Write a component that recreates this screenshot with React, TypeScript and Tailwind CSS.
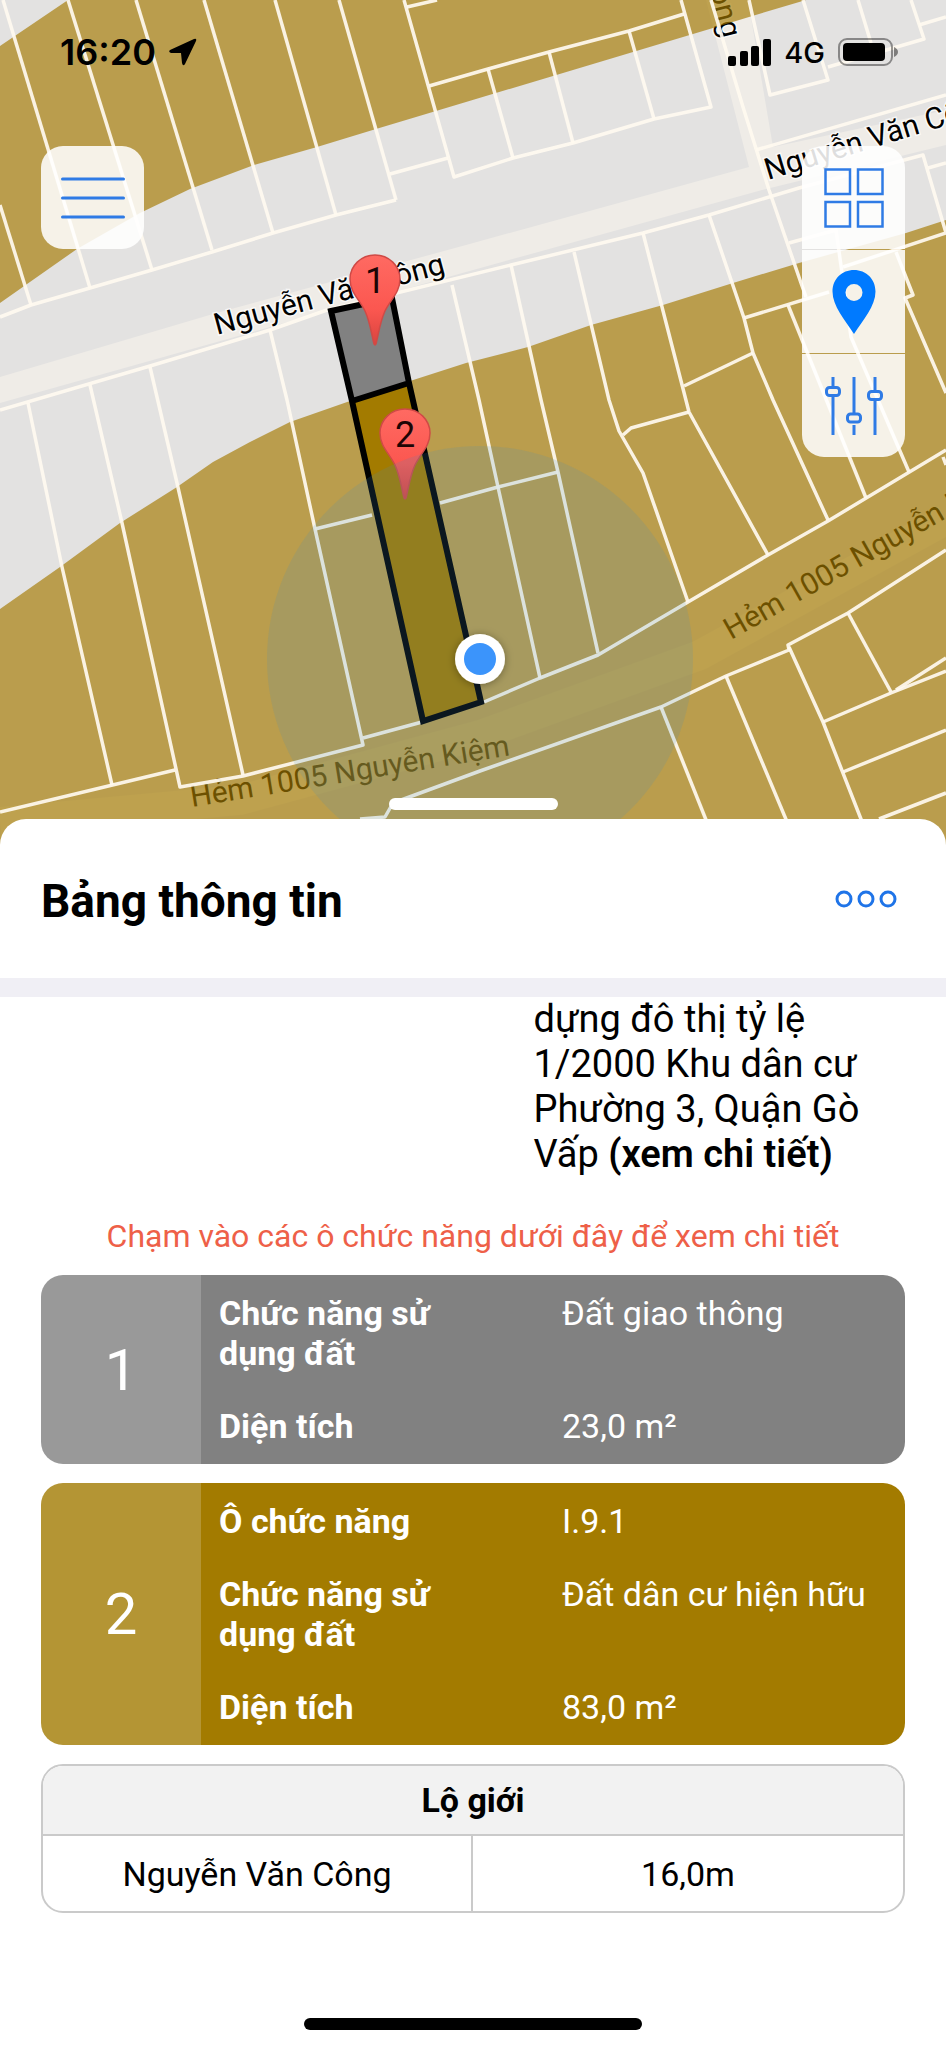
import React from 'react';

type Point = [number, number];

/* Parcel boundaries, each a run of points on the map canvas. */
const parcelLines: Point[][] = [
  [[3, 0], [90, 288]],
  [[68, 0], [152, 270]],
  [[136, 0], [212, 250]],
  [[204, 0], [273, 233]],
  [[275, 0], [336, 215]],
  [[339, 0], [396, 200]],
  [[0, 205], [31, 305]],
  [[0, 317], [31, 305], [90, 288], [152, 270], [212, 252], [273, 233], [336, 215], [396, 200]],
  [[404, 0], [454, 177], [513, 158], [573, 143], [654, 119], [711, 107], [681, 0]],
  [[390, 174], [448, 158]],
  [[407, 7], [437, 0]],
  [[429, 86], [488, 69], [549, 52], [629, 31], [684, 14]],
  [[488, 69], [513, 158]],
  [[549, 52], [573, 143]],
  [[629, 31], [654, 119]],
  [[711, 0], [743, 107], [769, 190], [801, 283], [806, 297]],
  [[749, 0], [770, 95], [828, 80], [803, 0]],
  [[828, 67], [924, 39], [911, 0]],
  [[858, 0], [871, 43]],
  [[919, 25], [946, 17]],
  [[756, 150], [946, 95]],
  [[0, 410], [150, 366], [270, 330], [327, 310], [511, 265], [643, 233], [709, 215], [799, 188], [923, 155], [946, 233], [843, 267]],
  [[928, 168], [946, 163]],
  [[789, 243], [836, 230], [851, 337], [909, 472]],
  [[744, 318], [829, 292]],
  [[788, 305], [866, 498]],
  [[896, 252], [913, 295], [905, 298], [946, 393]],
  [[943, 457], [946, 465]],
  [[709, 215], [744, 318], [753, 353], [773, 400], [828, 520]],
  [[684, 386], [753, 353]],
  [[643, 233], [689, 412], [768, 555]],
  [[623, 435], [631, 428], [689, 412]],
  [[574, 252], [609, 400], [619, 431], [643, 473], [688, 602]],
  [[511, 265], [541, 400], [558, 472], [598, 653]],
  [[452, 285], [479, 400], [498, 487], [540, 678]],
  [[484, 702], [540, 678], [598, 655], [688, 602], [768, 555], [828, 521], [946, 450]],
  [[315, 529], [372, 515]],
  [[440, 503], [498, 487], [558, 472]],
  [[28, 403], [62, 567], [112, 785]],
  [[90, 385], [122, 523], [180, 787], [243, 776], [363, 745], [315, 529], [287, 400], [270, 330]],
  [[150, 367], [177, 483], [243, 775]],
  [[0, 812], [175, 770]],
  [[363, 738], [422, 722]],
  [[360, 819], [385, 817], [393, 803], [480, 771], [661, 707], [726, 676], [789, 650], [788, 645], [848, 613], [946, 550]],
  [[661, 707], [722, 860]],
  [[726, 676], [803, 860]],
  [[789, 647], [823, 722], [877, 860]],
  [[848, 613], [891, 692]],
  [[823, 722], [891, 693], [946, 671]],
  [[896, 690], [946, 658]],
  [[843, 772], [946, 730]],
  [[879, 819], [946, 793]],
];

function MapMarker({ x, y, label }: { x: number; y: number; label: string }) {
  return (
    <g transform={`translate(${x} ${y})`}>
      <path
        d="M0-25C14-25 25-14 25-1C25 12 16 19 10 31C5 42 4 52 1 64Q0 66-1 64C-4 52-5 42-10 31C-16 19-25 12-25-1C-25-14-14-25 0-25Z"
        fill="url(#marker)"
        stroke="#cf4a46"
        strokeWidth="1.5"
      />
      <text y="13" textAnchor="middle" className="fill-[#1d0505] font-['Roboto',sans-serif] text-[36px]">
        {label}
      </text>
    </g>
  );
}

function MapCanvas() {
  const halo = "fill-black stroke-white/70 stroke-[3px] font-['Roboto',sans-serif] text-[30px] [paint-order:stroke]";
  const plain = "fill-black font-['Roboto',sans-serif] text-[30px]";
  return (
    <svg
      viewBox="0 0 946 860"
      preserveAspectRatio="xMidYMin slice"
      className="absolute inset-x-0 top-0 h-[860px] w-full"
      role="img"
      aria-label="Nguyễn Văn Công"
    >
      <defs>
        <linearGradient id="marker" x1="0" y1="0" x2="0" y2="1">
          <stop offset="0" stopColor="#ff6a62" />
          <stop offset="0.6" stopColor="#fb5750" />
          <stop offset="1" stopColor="#d9443f" />
        </linearGradient>
        <filter id="shade" x="-50%" y="-50%" width="200%" height="200%">
          <feDropShadow dx="0" dy="1" stdDeviation="4" floodOpacity="0.35" />
        </filter>
      </defs>
      <rect width="946" height="860" fill="#e3e2e1" />

      {/* Roads */}
      <path d="M0 377L213 314L466 245L749 167L706 0H748L773 147L946 110V145L762 190L466 272L0 403Z" fill="#efece7" />
      <path d="M0 822L240 800L480 735L700 655L946 520" fill="none" stroke="#efece5" strokeWidth="30" />

      {/* Street names */}
      <text transform="translate(217 335) rotate(-15.2)" className={halo}>Nguyễn Văn Công</text>
      <text transform="translate(768 180) rotate(-17)" className={halo}>Nguyễn Văn Công</text>
      <text transform="translate(722 39) rotate(76)" textAnchor="end" className={halo}>ông</text>
      <text transform="translate(192 807) rotate(-9.2)" className={plain}>Hẻm 1005 Nguyễn Kiệm</text>
      <text transform="translate(731 640) rotate(-29.5)" className={plain}>Hẻm 1005 Nguyễn Kiệm</text>

      {/* Residential land */}
      <g fill="#a47a00" fillOpacity="0.66">
        <path d="M68 0H806L749 17L713 28L633 52L563 73L466 102L376 129L317 147L254 165L190 189L140 213L77 249L0 303V46Z" />
        <path d="M0 609L60 567L120 523L177 487L213 462L250 442L290 422L350 401L407 382L466 363L528 347L591 325L663 305L733 283L799 263L906 233L946 220V860H0Z" />
      </g>

      <g fill="none" stroke="#fffaf0" strokeWidth="3.5" strokeLinejoin="round">
        {parcelLines.map((line, i) => (
          <polyline key={i} points={line.map((p) => p.join(',')).join(' ')} strokeOpacity="0.92" />
        ))}
      </g>

      {/* Selected lot */}
      <path d="M331 311L392 298L409 383L352 401Z" fill="#818181" />
      <path d="M352 401L409 383L481 702L423 721Z" fill="#a37b00" />
      <path d="M331 311L392 298L409 383L481 702L423 721L352 401ZM352 401L409 383" fill="none" stroke="#000" strokeWidth="6" />

      <MapMarker x={375} y={280} label="1" />
      <MapMarker x={405} y={434} label="2" />

      <circle cx="480" cy="659" r="213" fill="#4290be" fillOpacity="0.16" />
      <circle cx="480" cy="659" r="25" fill="#fff" filter="url(#shade)" />
      <circle cx="480" cy="659" r="16" fill="#3b94fb" />
    </svg>
  );
}

function StatusBar() {
  return (
    <div className="flex h-[104px] items-center justify-between pr-[48px] pl-[60px] font-['Inter',sans-serif] text-black">
      <div className="flex items-center gap-3">
        <span className="text-[36px] leading-none font-semibold">16:20</span>
        <svg viewBox="0 0 30 28" className="h-7 w-[30px]" aria-hidden="true">
          <path d="M2 12L26 1Q29 0 28 3L17 26Q15 29 14 25L13 15L3 15Q0 14 2 12Z" />
        </svg>
      </div>
      <div className="flex items-center gap-[13px]">
        <svg viewBox="0 0 43 27" className="h-[27px] w-[43px]" aria-hidden="true">
          <rect x="0" y="17" width="8" height="10" rx="2" />
          <rect x="12" y="12" width="8" height="15" rx="2" />
          <rect x="23" y="7" width="8" height="20" rx="2" />
          <rect x="35" y="0" width="8" height="27" rx="2" />
        </svg>
        <span className="text-[29px] leading-none font-medium">4G</span>
        <svg viewBox="0 0 60 28" className="h-7 w-[60px]" aria-hidden="true">
          <rect x="1" y="1" width="53" height="26" rx="8" fill="none" stroke="#000" strokeOpacity="0.4" strokeWidth="2" />
          <rect x="5" y="5" width="42" height="18" rx="4" />
          <path d="M56 9Q60 11 60 14T56 19Z" fillOpacity="0.45" />
        </svg>
      </div>
    </div>
  );
}

function ToolButton({ label, className, children }: { label: string; className: string; children: React.ReactNode }) {
  return (
    <button type="button" aria-label={label} className={`flex size-[103px] items-center justify-center bg-white/87 ${className}`}>
      {children}
    </button>
  );
}

function MapTools() {
  return (
    <div className="mt-[42px] flex items-start justify-between px-[41px]">
      <ToolButton label="Menu" className="rounded-[22px]">
        <svg viewBox="0 0 64 44" className="h-11 w-16" stroke="#2f7be5" strokeWidth="3" strokeLinecap="round" aria-hidden="true">
          <path d="M1.500 3H62.500M1.500 22H62.500M1.500 41H62.500" />
        </svg>
      </ToolButton>
      <div className="flex flex-col gap-px">
        <ToolButton label="Lớp bản đồ" className="rounded-t-[22px]">
          <svg viewBox="0 0 60 60" className="size-[60px]" fill="none" stroke="#2f7be5" strokeWidth="2.500" aria-hidden="true">
            <rect x="1.500" y="1.500" width="24.500" height="24.500" />
            <rect x="34" y="1.500" width="24.500" height="24.500" />
            <rect x="1.500" y="34" width="24.500" height="24.500" />
            <rect x="34" y="34" width="24.500" height="24.500" />
          </svg>
        </ToolButton>
        <ToolButton label="Vị trí" className="">
          <svg viewBox="0 0 44 64" className="h-16 w-11" aria-hidden="true">
            <path fillRule="evenodd" d="M22 0C34 0 43.500 9 43.500 21.500C43.500 36 31 50 22 64C13 50 .5 36 .5 21.500C.5 9 10 0 22 0ZM22 14A8.500 8.500 0 1 0 22 31A8.500 8.500 0 1 0 22 14Z" fill="#007aff" />
          </svg>
        </ToolButton>
        <ToolButton label="Bộ lọc" className="rounded-b-[22px]">
          <svg viewBox="0 0 58 58" className="size-[58px]" fill="none" stroke="#2f7be5" strokeWidth="3" aria-hidden="true">
            <path d="M8 0V10M8 20V58M29 0V36M29 48V58M50 0V14M50 24V58" />
            <rect x="1.500" y="10.500" width="13" height="8" rx="3" />
            <rect x="22.500" y="37" width="13" height="8" rx="3" />
            <rect x="43.500" y="14.500" width="13" height="8" rx="3" />
          </svg>
        </ToolButton>
      </div>
    </div>
  );
}

interface Zone {
  id: number;
  numberClass: string;
  bodyClass: string;
  rows: { label: string; value: string }[];
}

const zones: Zone[] = [
  {
    id: 1,
    numberClass: 'bg-[#999999]',
    bodyClass: 'bg-[#818181]',
    rows: [
      { label: 'Chức năng sử dụng đất', value: 'Đất giao thông' },
      { label: 'Diện tích', value: '23,0 m²' },
    ],
  },
  {
    id: 2,
    numberClass: 'bg-[#b49534]',
    bodyClass: 'bg-[#a37b00]',
    rows: [
      { label: 'Ô chức năng', value: 'I.9.1' },
      { label: 'Chức năng sử dụng đất', value: 'Đất dân cư hiện hữu' },
      { label: 'Diện tích', value: '83,0 m²' },
    ],
  },
];

function ZoneCard({ zone }: { zone: Zone }) {
  return (
    <button type="button" className="flex w-full overflow-hidden rounded-[22px] text-left text-white">
      <span className={`flex w-[160px] shrink-0 items-center justify-center self-stretch text-[58px] leading-none ${zone.numberClass}`}>
        {zone.id}
      </span>
      <span className={`flex flex-1 flex-col gap-[33px] px-[18px] py-[18px] text-[34px] leading-10 ${zone.bodyClass}`}>
        {zone.rows.map((row) => (
          <span key={row.label} className="grid grid-cols-2 gap-[18px]">
            <span className="pr-20 font-bold">{row.label}</span>
            <span>{row.value}</span>
          </span>
        ))}
      </span>
    </button>
  );
}

export default function App() {
  return (
    <div className="min-h-screen bg-white font-['Roboto',sans-serif] text-black">
      <section className="relative h-[819px]">
        <MapCanvas />
        <div className="relative flex h-full flex-col">
          <StatusBar />
          <MapTools />
          <div className="mx-auto mt-auto mb-[9px] h-3 w-[169px] rounded-full bg-white" />
        </div>
      </section>

      <main className="relative rounded-t-[26px] bg-white">
        <header className="flex h-[159px] items-center justify-between pr-[43px] pl-[41px]">
          <h1 className="pt-1 text-[46px] leading-[54px] font-bold">Bảng thông tin</h1>
          <button type="button" aria-label="Thêm" className="px-[6px] py-3">
            <svg viewBox="0 0 62 18" className="h-[18px] w-[62px]" fill="none" stroke="#1f74e8" strokeWidth="3" aria-hidden="true">
              <circle cx="9" cy="9" r="7" />
              <circle cx="31" cy="9" r="7" />
              <circle cx="53" cy="9" r="7" />
            </svg>
          </button>
        </header>
        <div className="h-[19px] bg-[#f0eff5]" />

        <div className="px-[41px]">
          <p className="ml-[57%] text-[38px] leading-[45px]">
            dựng đô thị tỷ lệ
            <br />
            1/2000 Khu dân cư Phường 3, Quận Gò Vấp{' '}
            <a href="#chi-tiet" className="font-semibold">(xem chi tiết)</a>
          </p>
          <p className="mt-[39px] text-center text-[32px] leading-10 text-[#ee6048]">
            Chạm vào các ô chức năng dưới đây để xem chi tiết
          </p>
          <div className="mt-[19px] flex flex-col gap-[19px]">
            {zones.map((zone) => (
              <ZoneCard key={zone.id} zone={zone} />
            ))}
            <div className="overflow-hidden rounded-[22px] border-2 border-[#cacaca]">
              <table className="w-full table-fixed border-separate border-spacing-0 text-center text-[34px] leading-10">
                <thead>
                  <tr>
                    <th colSpan={2} className="h-[70px] border-b-2 border-[#cacaca] bg-[#f2f2f2] font-bold">Lộ giới</th>
                  </tr>
                </thead>
                <tbody>
                  <tr>
                    <td className="h-[75px] border-r-2 border-[#cacaca]">Nguyễn Văn Công</td>
                    <td>16,0m</td>
                  </tr>
                </tbody>
              </table>
            </div>
          </div>
        </div>

        <footer className="pt-[105px] pb-[18px]">
          <div className="mx-auto h-3 w-[338px] rounded-full bg-black" />
        </footer>
      </main>
    </div>
  );
}
